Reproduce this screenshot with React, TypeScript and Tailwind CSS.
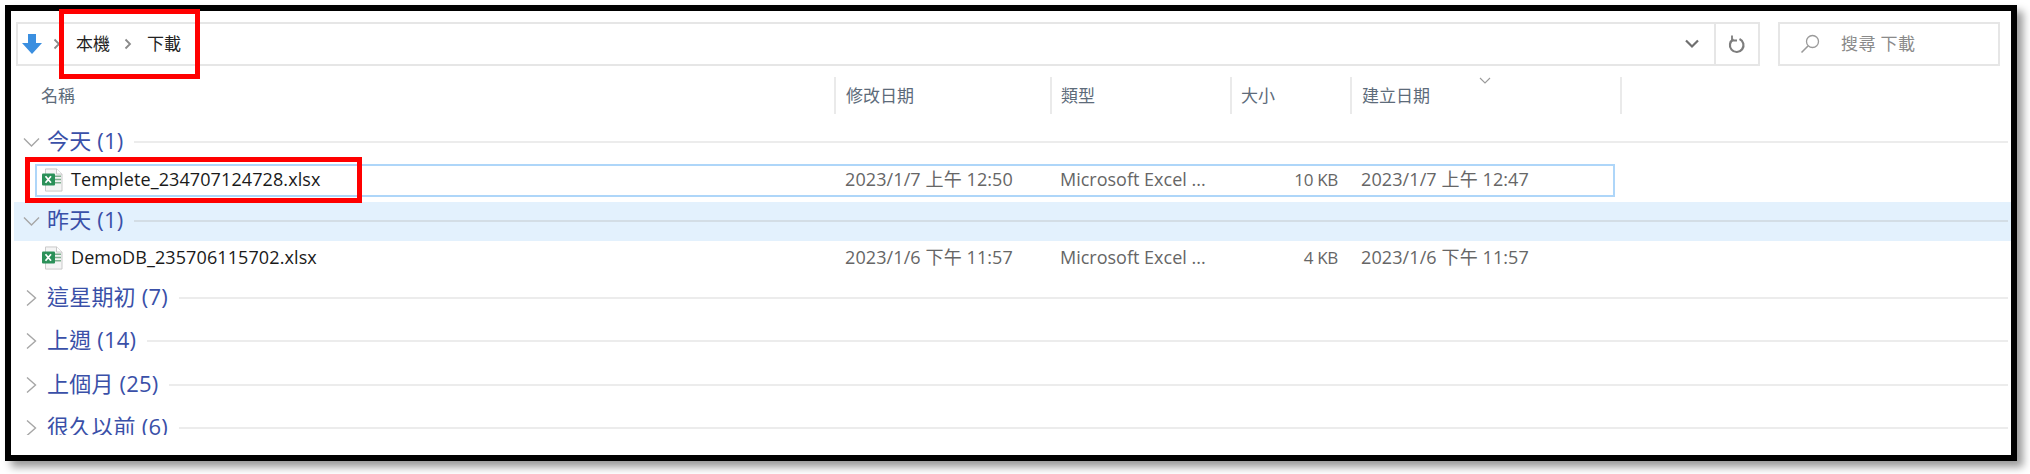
const font = { fontFamily: '"Open Sans", "Noto Sans CJK TC", sans-serif' };

function Chevron({ open }: { open: boolean }) {
  return (
    <svg width="18" height="16" viewBox="0 0 18 16" fill="none" stroke="#a6a6a6" strokeWidth="1.4" className="shrink-0">
      {open ? <path d="M2 4.500l7.500 7.500 7.500-7.500" /> : <path d="M5 .5l8.500 7.500-8.500 7.500" />}
    </svg>
  );
}

function ExcelIcon() {
  return (
    <svg width="22" height="24" viewBox="0 0 22 26" preserveAspectRatio="none" className="shrink-0 -translate-y-[1px]">
      <path d="M4.500 1h11l5.500 5.500V25h-16.500z" fill="#f4f4f4" stroke="#c8c8c8" />
      <path d="M15.500 1v5.500H21" fill="#fff" stroke="#c8c8c8" />
      <path d="M14 9h6M14 12.500h6M14 16h6" stroke="#7fb08f" strokeWidth="1.600" />
      <rect x="1" y="6" width="13" height="13" rx="1" fill="#2a9058" />
      <path d="M4.500 9l5.500 7M10 9l-5.500 7" stroke="#fff" strokeWidth="1.700" />
    </svg>
  );
}

function Group({ label, open, height = 'h-[43.5px]', active }: { label: string; open?: boolean; height?: string; active?: boolean }) {
  return (
    <div className={`${height} pl-[8px] pr-[3px] flex items-center ${active ? 'bg-[#e3f1fd] pb-[2px]' : ''}`}>
      <Chevron open={!!open} />
      <span className="ml-[7px] text-[22px] leading-none tracking-[0.2px] text-[#3a50a8] whitespace-nowrap -translate-y-[2px]">{label}</span>
      <div className={`ml-[11px] flex-1 h-[2px] ${active ? 'bg-[#d3dde5]' : 'bg-[#ececec]'}`} />
    </div>
  );
}

function FileRow({ name, modified, size, created, selected }: { name: string; modified: string; size: string; created: string; selected?: boolean }) {
  return (
    <div className={`ml-[21px] w-[1580px] h-[33px] border-2 grid grid-cols-[797px_216px_180px_120px_263px] items-center text-[18px] tracking-[0.1px] ${selected ? 'border-[#aed6f9]' : 'border-transparent'}`}>
      <div className="pl-[4px] flex items-center gap-[8px] text-[#1a1a1a]">
        <ExcelIcon />
        <span className="-translate-y-[1px]">{name}</span>
      </div>
      <div className="pl-[11px] text-[#666] -translate-y-[1px]">{modified}</div>
      <div className="pl-[10px] text-[#666] tracking-normal -translate-y-[1px]">Microsoft Excel ...</div>
      <div className="pr-[12px] text-right text-[17px] tracking-[-0.3px] text-[#666] -translate-y-[1px]">{size}</div>
      <div className="pl-[11px] text-[#666] -translate-y-[1px]">{created}</div>
    </div>
  );
}

export default function App() {
  return (
    <div className="relative w-[2030px] h-[474px] bg-white pt-[5px] pl-[5px] overflow-hidden" style={font}>
      <div className="w-[2012px] h-[456px] border-[6px] border-black bg-white shadow-[6px_6px_8px_rgba(0,0,0,0.4)]">
        {/* address + search */}
        <div className="mt-[11px] h-[44px] pl-[5px] flex">
          <div className="w-[1744px] border-2 border-[#e6e6e6] flex items-center">
            <svg width="20" height="20" viewBox="0 0 20 20" className="ml-[4px] shrink-0">
              <path d="M6 0h8v9h6L10 20 0 9h6z" fill="#3b8fe0" />
            </svg>
            <svg width="8" height="12" viewBox="0 0 8 12" fill="none" stroke="#8a8a8a" strokeWidth="1.800" className="ml-[11px] shrink-0">
              <path d="M1.500 1.500L6 6l-4.500 4.500" />
            </svg>
            <span className="ml-[15px] text-[17px] text-[#222]">本機</span>
            <svg width="8" height="12" viewBox="0 0 8 12" fill="none" stroke="#8a8a8a" strokeWidth="1.800" className="ml-[14px] shrink-0">
              <path d="M1.500 1.500L6 6l-4.500 4.500" />
            </svg>
            <span className="ml-[15px] text-[17px] text-[#222]">下載</span>
            <div className="flex-1" />
            <svg width="14" height="10" viewBox="0 0 14 10" fill="none" stroke="#6f6f6f" strokeWidth="2.200" className="mr-[15px] shrink-0">
              <path d="M1 1.500l6 6 6-6" />
            </svg>
            <div className="w-[44px] h-full border-l-2 border-[#e6e6e6] flex items-center justify-center">
              <svg width="18" height="20" viewBox="0 0 18 20" fill="none" stroke="#7d7d7d" strokeWidth="2.200">
                <path d="M11.500 5a6.800 6.800 0 1 1-6 .2" />
                <path d="M4 1.500v5h5" strokeWidth="1.800" />
              </svg>
            </div>
          </div>
          <div className="ml-[18px] w-[222px] border-2 border-[#e6e6e6] flex items-center">
            <svg width="20" height="20" viewBox="0 0 20 20" fill="none" stroke="#9a9a9a" strokeWidth="1.300" className="ml-[20px] shrink-0">
              <circle cx="12.500" cy="7.500" r="6" />
              <path d="M8 12L1.500 18.500" strokeWidth="1.600" />
            </svg>
            <span className="ml-[21px] text-[17px] text-[#8a8a8a] tracking-[0.4px]">搜尋 下載</span>
          </div>
        </div>

        {/* column headers */}
        <div className="mt-[11px] h-[37px] grid grid-cols-[823px_216px_180px_120px_272px] text-[17px] text-[#5d6b7a]">
          <div className="pl-[30px] flex items-center">名稱</div>
          <div className="border-l-2 border-[#eaeaea] pl-[10px] flex items-center">修改日期</div>
          <div className="border-l-2 border-[#eaeaea] pl-[9px] flex items-center">類型</div>
          <div className="border-l-2 border-[#eaeaea] pl-[9px] flex items-center">大小</div>
          <div className="relative border-x-2 border-[#eaeaea] pl-[10px] flex items-center">
            建立日期
            <svg width="12" height="8" viewBox="0 0 12 8" fill="none" stroke="#9a9a9a" strokeWidth="1.100" className="absolute left-[127px] top-[0px]">
              <path d="M1 1l5 5 5-5" />
            </svg>
          </div>
        </div>

        {/* file list */}
        <div className="h-[321px] overflow-hidden pl-[3px]">
          <div className="pt-[9px]">
            <Group label="今天 (1)" open height="h-[38px]" />
          </div>
          <div className="pt-[3px]">
            <FileRow name="Templete_234707124728.xlsx" modified="2023/1/7 上午 12:50" size="10 KB" created="2023/1/7 上午 12:47" selected />
          </div>
          <div className="pt-[5px]">
            <Group label="昨天 (1)" open active height="h-[39px]" />
          </div>
          <div className="pt-[1px] pb-[1px]">
            <FileRow name="DemoDB_235706115702.xlsx" modified="2023/1/6 下午 11:57" size="4 KB" created="2023/1/6 下午 11:57" />
          </div>
          <Group label="這星期初 (7)" />
          <Group label="上週 (14)" />
          <Group label="上個月 (25)" />
          <Group label="很久以前 (6)" />
        </div>
      </div>

      {/* red callouts */}
      <div className="absolute left-[59px] top-[9px] w-[141px] h-[70px] border-[5px] border-[#ff0000]" />
      <div className="absolute left-[25px] top-[157px] w-[337px] h-[46px] border-[5px] border-[#ff0000]" />
    </div>
  );
}
